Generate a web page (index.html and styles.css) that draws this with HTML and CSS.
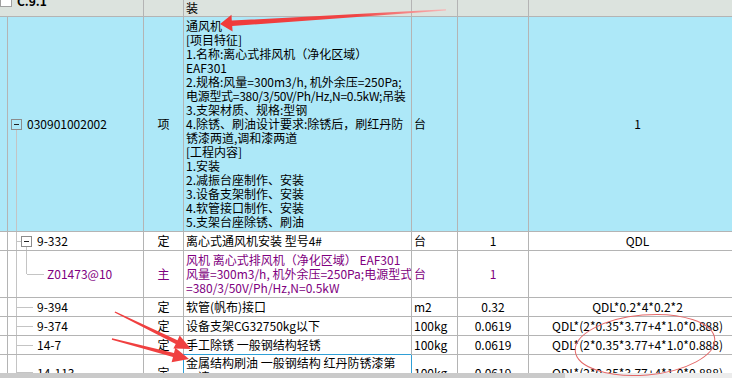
FILE: index.html
```html
<!DOCTYPE html>
<html lang="zh-CN">
<head>
<meta charset="utf-8">
<title>清单</title>
<link rel="stylesheet" href="styles.css">
</head>
<body>
<div class="page">
  <div class="viewport">
    <div class="grid">
      <div class="row head">
        <div class="c01"><span class="chk"></span><b>C.9.1</b></div>
        <div></div>
        <div class="name bottom">装</div>
        <div></div><div></div><div></div>
      </div>

      <div class="row item">
        <div></div>
        <div class="code t-item"><span class="box"></span>030901002002</div>
        <div class="type">项</div>
        <div class="name"><span>通风机<br>[项目特征]<br>1.名称:离心式排风机（净化区域）<br>EAF301<br>2.规格:风量=300m3/h, 机外余压=250Pa;<br><span class="tight">电源型式=380/3/50V/Ph/Hz,N=0.5kW;吊装</span><br>3.支架材质、规格:型钢<br>4.除锈、刷油设计要求:除锈后，刷红丹防<br>锈漆两道,调和漆两道<br>[工程内容]<br>1.安装<br>2.减振台座制作、安装<br>3.设备支架制作、安装<br>4.软管接口制作、安装<br>5.支架台座除锈、刷油</span></div>
        <div class="unit">台</div>
        <div class="qty"></div>
        <div class="expr">1</div>
      </div>

      <div class="row r19">
        <div></div>
        <div class="code t-sub"><span class="box"></span>9-332</div>
        <div class="type">定</div>
        <div class="name">离心式通风机安装 型号4#</div>
        <div class="unit">台</div>
        <div class="qty">1</div>
        <div class="expr">QDL</div>
      </div>

      <div class="row main">
        <div></div>
        <div class="code t-main">Z01473@10</div>
        <div class="type">主</div>
        <div class="name"><span>风机 离心式排风机（净化区域） EAF301<br>风量=300m3/h, 机外余压=250Pa;电源型式<br>=380/3/50V/Ph/Hz,N=0.5kW</span></div>
        <div class="unit">台</div>
        <div class="qty">1</div>
        <div class="expr"></div>
      </div>

      <div class="row r19">
        <div></div>
        <div class="code t-leaf">9-394</div>
        <div class="type">定</div>
        <div class="name">软管(帆布)接口</div>
        <div class="unit">m2</div>
        <div class="qty">0.32</div>
        <div class="expr">QDL*0.2*4*0.2*2</div>
      </div>

      <div class="row r19">
        <div></div>
        <div class="code t-leaf">9-374</div>
        <div class="type">定</div>
        <div class="name">设备支架CG32750kg以下</div>
        <div class="unit">100kg</div>
        <div class="qty">0.0619</div>
        <div class="expr">QDL*(2*0.35*3.77+4*1.0*0.888)</div>
      </div>

      <div class="row r19">
        <div></div>
        <div class="code t-leaf">14-7</div>
        <div class="type">定</div>
        <div class="name">手工除锈 一般钢结构轻锈</div>
        <div class="unit">100kg</div>
        <div class="qty">0.0619</div>
        <div class="expr">QDL*(2*0.35*3.77+4*1.0*0.888)</div>
      </div>

      <div class="row last">
        <div></div>
        <div class="code t-leaf">14-113</div>
        <div class="type">定</div>
        <div class="name top selected"><span>金属结构刷油 一般钢结构 红丹防锈漆第<br>一遍</span></div>
        <div class="unit">100kg</div>
        <div class="qty">0.0619</div>
        <div class="expr">QDL*(2*0.35*3.77+4*1.0*0.888)</div>
      </div>
    </div>
  </div>
  <div class="hscroll"><div class="thumb"></div></div>

  <svg class="marks" width="732" height="378" viewBox="0 0 732 378">
    <defs>
      <linearGradient id="fade" x1="220" y1="0" x2="446" y2="0" gradientUnits="userSpaceOnUse">
        <stop offset="0" stop-color="#f03a3a"/>
        <stop offset="0.6" stop-color="#f04444"/>
        <stop offset="1" stop-color="#f8b8b8"/>
      </linearGradient>
    </defs>
    <polygon fill="url(#fade)" points="220,24 231.5,14.8 231.8,20.6 446,9.3 446,10.6 232.2,26 232.6,31.6"/>
    <polygon fill="#f04040" points="191,349 179.7,335.5 177.5,340.2 115.2,311.4 114.6,312.6 175.7,343.9 173.4,348.6"/>
    <polygon fill="#f04040" points="189,359 175.3,347.8 174,353.1 112.1,338.3 111.8,339.7 173,356.9 171.6,362.2"/>
    <ellipse cx="645" cy="345" rx="70" ry="30" transform="rotate(-5 645 345)" fill="none" stroke="#e46868" stroke-width="1"/>
  </svg>
</div>
</body>
</html>
```

FILE: styles.css
```css
* { box-sizing: border-box; }
html, body { margin: 0; padding: 0; }
body {
  width: 732px;
  height: 378px;
  overflow: hidden;
  background: #fff;
  font-family: "Noto Sans CJK SC", "Noto Sans", sans-serif;
  font-size: 12px;
  line-height: 14px;
  color: #000;
}
.page {
  position: relative;
  display: flex;
  flex-direction: column;
  height: 378px;
}
.viewport { flex: 1; overflow: hidden; }
.grid { width: 747px; }

.row {
  display: grid;
  grid-template-columns: 8px 136px 40px 228px 46px 71px 218px;
  border-bottom: 1px solid #b4b4b4;
  background: #fff;
}
.row > div {
  border-right: 1px solid #b4b4b4;
  display: flex;
  align-items: center;
  white-space: nowrap;
  overflow: hidden;
}

.head { height: 31px; margin-top: -14px; background: #dce3de; }
.head .c01 { grid-column: span 2; }
.head .bottom { align-items: flex-end; padding-bottom: 1px; }
.chk {
  display: inline-block;
  width: 12px;
  height: 11px;
  background: #fff;
  border: 1px solid #a0a0a0;
  margin-right: 5px;
}

.item { height: 215px; background: #ade8f8; }
.r19 { height: 19px; }
.main { height: 47px; color: #800080; }
.last { height: 36px; }

.type, .qty, .expr { justify-content: center; }
.name, .unit { padding-left: 2px; }
.name.top { align-items: flex-start; padding-top: 1px; }
.tight { letter-spacing: -0.3px; }
.selected {
  box-shadow: -1px -1px 0 0 #2f9fd6;
  border-right-color: #2f9fd6 !important;
}

.box {
  display: inline-block;
  position: relative;
  width: 11px;
  height: 11px;
  border: 1px solid #8c8c8c;
  margin-right: 5px;
  flex: none;
}
.box::after {
  content: "";
  position: absolute;
  left: 2px;
  top: 4px;
  width: 5px;
  height: 1px;
  background: #222;
}

.code { background-repeat: no-repeat; }
.t-item {
  padding-left: 3px;
  background-image: linear-gradient(#c4c4c4, #c4c4c4);
  background-position: 8px 100%;
  background-size: 1px calc(50% - 5px);
}
.t-sub {
  padding-left: 13px;
  background-image:
    linear-gradient(#c4c4c4, #c4c4c4),
    linear-gradient(#c4c4c4, #c4c4c4),
    linear-gradient(#c4c4c4, #c4c4c4);
  background-position: 8px 0, 9px 50%, 18px 100%;
  background-size: 1px 100%, 4px 1px, 1px calc(50% - 5px);
}
.t-main {
  padding-left: 39px;
  background-image:
    linear-gradient(#c4c4c4, #c4c4c4),
    linear-gradient(#c4c4c4, #c4c4c4),
    linear-gradient(#c4c4c4, #c4c4c4);
  background-position: 8px 0, 18px 0, 19px 50%;
  background-size: 1px 100%, 1px 50%, 17px 1px;
}
.t-leaf {
  padding-left: 29px;
  background-image:
    linear-gradient(#c4c4c4, #c4c4c4),
    linear-gradient(#c4c4c4, #c4c4c4);
  background-position: 8px 0, 9px 50%;
  background-size: 1px 100%, 16px 1px;
}

.hscroll {
  height: 5px;
  background: #ececec;
  flex: none;
}
.thumb { width: 565px; height: 5px; background: #cacaca; }

.marks {
  position: absolute;
  left: 0;
  top: 0;
  pointer-events: none;
}
```
